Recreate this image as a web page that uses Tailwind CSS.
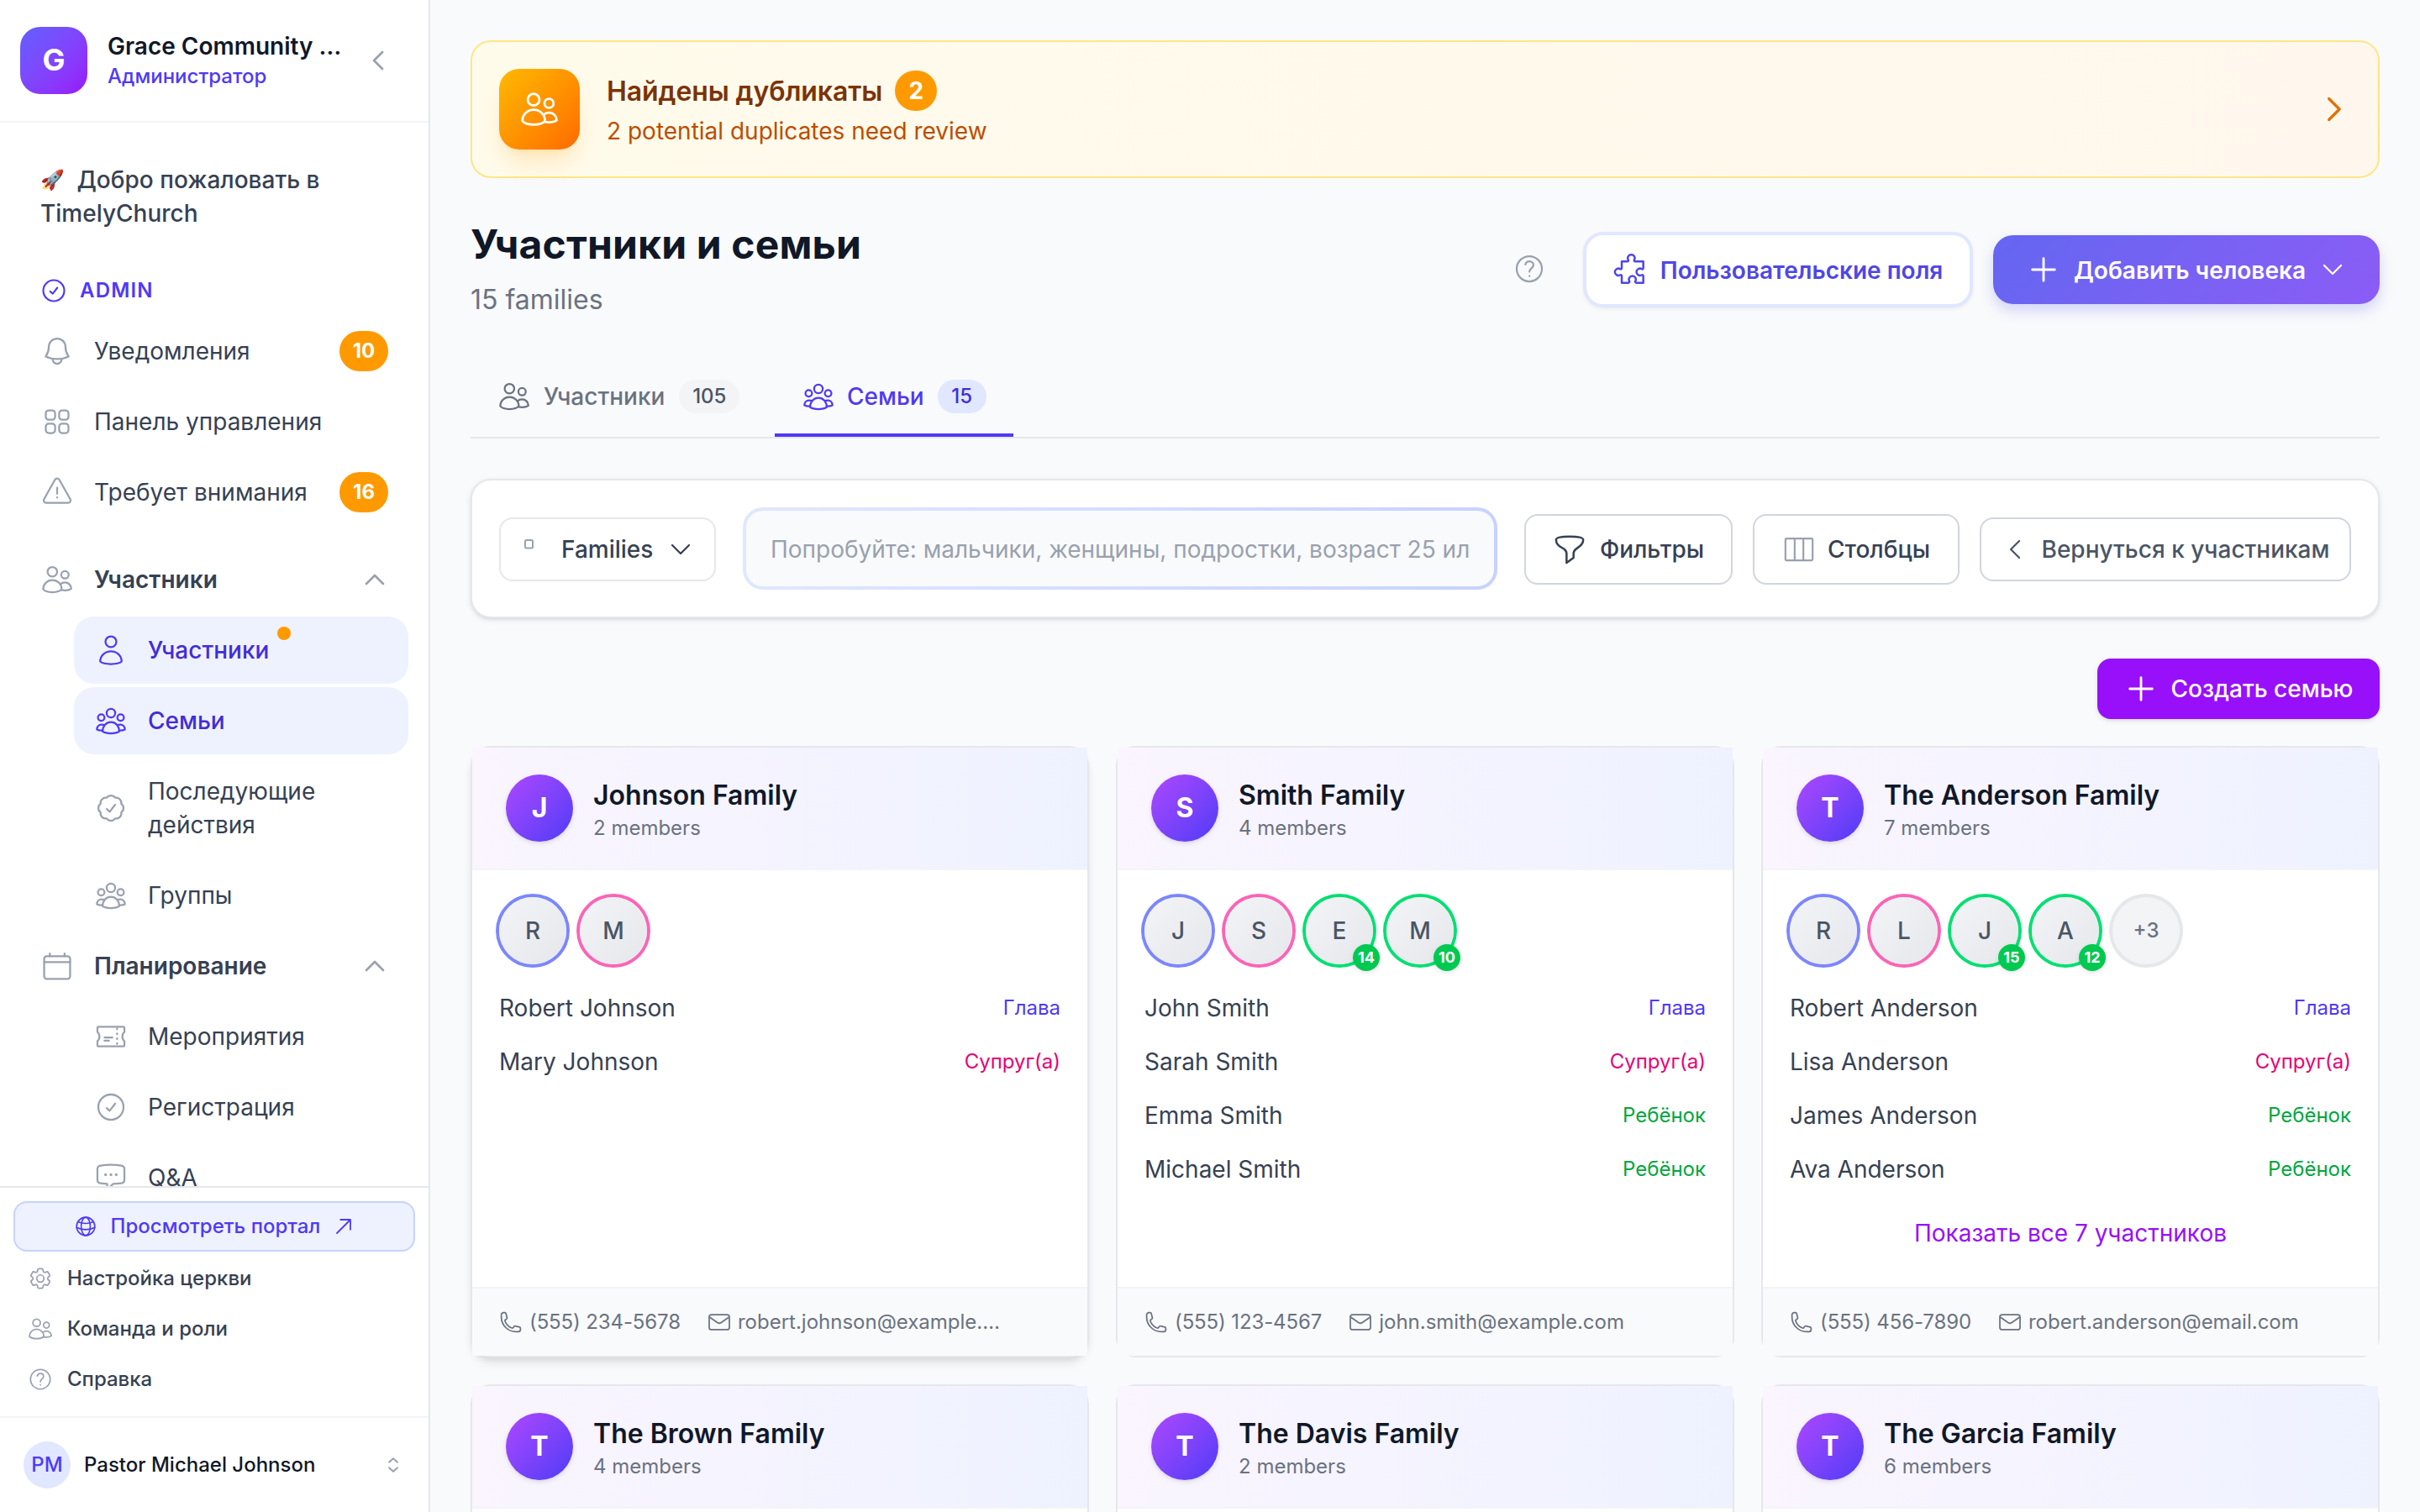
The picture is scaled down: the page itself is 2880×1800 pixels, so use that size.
<!DOCTYPE html>
<html lang="ru">
  <head>
    <meta charset="UTF-8" />
    <meta name="viewport" content="width=device-width, initial-scale=1.0" />
    <title>TimelyChurch — Участники и семьи</title>
    <script src="https://cdn.jsdelivr.net/npm/@tailwindcss/browser@4"></script>
  </head>

  <body class="flex w-full h-screen overflow-hidden bg-gray-50 font-['Inter',sans-serif] text-[28px] leading-10 text-gray-700">
    <!-- ====== Icon sprite ====== -->
    <svg class="hidden" xmlns="http://www.w3.org/2000/svg">
      <defs>
        <symbol id="users" viewBox="0 0 24 24">
          <circle cx="8.2" cy="5.8" r="3.8" /><circle cx="18.2" cy="8.2" r="2.95" />
          <path d="M.9 19.6c0-4 3.3-7.2 7.35-7.2s7.35 3.2 7.35 7.2c-1.2 1.6-4.4 2.4-7.35 2.4S2.1 21.2.9 19.6ZM14.5 15.7c1-.9 2.3-1.4 3.7-1.4 2.9 0 5 2.2 5 4.9-1.4 1-4.6 1.6-7.6 1.1" />
        </symbol>
        <symbol id="user" viewBox="0 0 24 24">
          <circle cx="12" cy="5.3" r="4.3" />
          <path d="M3.5 21c0-4.6 3.8-8.1 8.5-8.1s8.5 3.5 8.5 8.1c-1.6 1.4-5 2-8.5 2s-6.9-.6-8.5-2Z" />
        </symbol>
        <symbol id="group" viewBox="0 0 24 24">
          <circle cx="12" cy="6" r="3.4" /><circle cx="4.3" cy="9.5" r="2.6" /><circle cx="19.7" cy="9.5" r="2.6" />
          <path d="M5.4 20.5c0-4.5 2.9-7.4 6.6-7.4s6.6 2.9 6.6 7.4c-1.4 1-3.9 1.5-6.6 1.5s-5.2-.5-6.6-1.5ZM7 15.4c-.8-.2-1.6-.3-2.4-.3-2.2 0-3.7 1.7-3.7 3.9 1.2.6 2.8.8 4.6.7M17 15.4c.8-.2 1.6-.3 2.4-.3 2.2 0 3.7 1.7 3.7 3.9-1.2.6-2.8.8-4.6.7" />
        </symbol>
        <symbol id="bell" viewBox="0 0 24 24">
          <path d="M12 2a6.6 6.6 0 0 0-6.6 6.6c0 4-1 5.4-2.5 7.7 2.7 1.3 5.8 1.9 9.1 1.9s6.4-.6 9.1-1.9c-1.5-2.3-2.5-3.7-2.5-7.7A6.6 6.6 0 0 0 12 2ZM8.4 18.4a3.6 3.6 0 0 0 7.2 0" />
        </symbol>
        <symbol id="grid" viewBox="0 0 24 24">
          <rect x="3" y="3" width="7.4" height="7.4" rx="2.3" /><rect x="13.6" y="3" width="7.4" height="7.4" rx="2.3" />
          <rect x="3" y="13.6" width="7.4" height="7.4" rx="2.3" /><rect x="13.6" y="13.6" width="7.4" height="7.4" rx="2.3" />
        </symbol>
        <symbol id="warning" viewBox="0 0 24 24">
          <path d="M10.3 2 1.5 17.7a1.9 1.9 0 0 0 1.7 2.7h17.6a1.9 1.9 0 0 0 1.7-2.7L13.7 2a1.95 1.95 0 0 0-3.4 0ZM12 8.4v4.8M12 16.1v.1" />
        </symbol>
        <symbol id="check-circle" viewBox="0 0 24 24">
          <circle cx="12" cy="12" r="10" /><path d="m8.6 12.8 2.4 2.1 4.4-5.7" />
        </symbol>
        <symbol id="check-badge" viewBox="0 0 24 24">
          <g transform="translate(-1.3 -1.3) scale(1.11)" stroke-width="1.35">
            <path d="M21 12c0 1.268-.63 2.39-1.593 3.068a3.745 3.745 0 0 1-1.043 3.296 3.745 3.745 0 0 1-3.296 1.043A3.745 3.745 0 0 1 12 21c-1.268 0-2.39-.63-3.068-1.593a3.746 3.746 0 0 1-3.296-1.043 3.745 3.745 0 0 1-1.043-3.296A3.745 3.745 0 0 1 3 12c0-1.268.63-2.39 1.593-3.068a3.745 3.745 0 0 1 1.043-3.296 3.746 3.746 0 0 1 3.296-1.043A3.746 3.746 0 0 1 12 3c1.268 0 2.39.63 3.068 1.593a3.746 3.746 0 0 1 3.296 1.043 3.746 3.746 0 0 1 1.043 3.296A3.745 3.745 0 0 1 21 12Z" />
            <path d="m9 12.6 2.1 2 3.9-5" />
          </g>
        </symbol>
        <symbol id="calendar" viewBox="0 0 24 24">
          <rect x="1.7" y="4.3" width="20.6" height="17.9" rx="2" /><path d="M1.7 8.9h20.6M6.2 2v2.3M17.9 2v2.3" />
        </symbol>
        <symbol id="ticket" viewBox="0 0 24 24">
          <path d="M1.3 5c0-.5.3-.8.8-.8h19.8c.5 0 .8.3.8.8v3.4c-1.2.9-1.6 2.2-1.6 3.6s.4 2.7 1.6 3.6V19c0 .5-.3.8-.8.8H2.1c-.5 0-.8-.3-.8-.8v-3.4c1.2-.9 1.6-2.2 1.6-3.6s-.4-2.7-1.6-3.6ZM6.9 12.7h6.3M6.9 15.3h3.5" />
          <path d="M16.9 5.6v13.6" stroke-dasharray=".6 3.3" />
        </symbol>
        <symbol id="chat" viewBox="0 0 24 24">
          <path d="M3.8 2.4c5.2-.8 11.2-.8 16.4 0 1.5.2 2.5 1.3 2.5 2.8v8.4c0 1.5-1 2.6-2.5 2.8-2.2.3-4.4.5-6.4.5-1.5 1.4-3 3-4.8 5V16.9c-1.8-.1-3.5-.3-5.2-.5-1.5-.2-2.5-1.3-2.5-2.8V5.2c0-1.5 1-2.6 2.5-2.8Z" />
          <path d="M7.8 9.6h.01M12 9.6h.01M16.2 9.6h.01" stroke-width="2.2" />
        </symbol>
        <symbol id="globe" viewBox="0 0 24 24">
          <circle cx="12" cy="12" r="10" /><ellipse cx="12" cy="12" rx="5" ry="10" />
          <path d="M3.6 7c2.4 1.2 5.2 1.8 8.4 1.8s6-.6 8.4-1.8M2 13.2c2.8 1.6 6.2 2.4 10 2.4s7.2-.8 10-2.4" />
        </symbol>
        <symbol id="arrow-up-right" viewBox="0 0 24 24"><path d="M4 20 20 4M8.2 4H20v11.8" /></symbol>
        <symbol id="cog" viewBox="0 0 24 24">
          <g transform="translate(-1.3 -1.3) scale(1.11)" stroke-width="1.35">
            <path d="M9.594 3.94c.09-.542.56-.94 1.11-.94h2.593c.55 0 1.02.398 1.11.94l.213 1.281c.063.374.313.686.645.87.074.04.147.083.22.127.325.196.72.257 1.075.124l1.217-.456a1.125 1.125 0 0 1 1.37.49l1.296 2.247a1.125 1.125 0 0 1-.26 1.431l-1.003.827c-.293.241-.438.613-.43.992a7.723 7.723 0 0 1 0 .255c-.008.378.137.75.43.991l1.004.827c.424.35.534.955.26 1.43l-1.298 2.247a1.125 1.125 0 0 1-1.369.491l-1.217-.456c-.355-.133-.75-.072-1.076.124a6.47 6.47 0 0 1-.22.128c-.331.183-.581.495-.644.869l-.213 1.281c-.09.543-.56.94-1.11.94h-2.594c-.55 0-1.019-.398-1.11-.94l-.213-1.281c-.062-.374-.312-.686-.644-.87a6.52 6.52 0 0 1-.22-.127c-.325-.196-.72-.257-1.076-.124l-1.217.456a1.125 1.125 0 0 1-1.369-.49l-1.297-2.247a1.125 1.125 0 0 1 .26-1.431l1.004-.827c.292-.24.437-.613.43-.991a6.932 6.932 0 0 1 0-.255c.007-.38-.138-.751-.43-.992l-1.004-.827a1.125 1.125 0 0 1-.26-1.43l1.297-2.247a1.125 1.125 0 0 1 1.37-.491l1.216.456c.356.133.751.072 1.076-.124.072-.044.146-.086.22-.128.332-.183.582-.495.644-.869l.214-1.28Z" />
            <circle cx="12" cy="12" r="3.3" />
          </g>
        </symbol>
        <symbol id="help" viewBox="0 0 24 24">
          <circle cx="12" cy="12" r="10" /><path d="M8.9 8.6c.3-1.6 1.5-2.6 3.2-2.6 1.8 0 3.2 1.2 3.2 2.9 0 2.7-3.2 2.7-3.2 5.5M12.1 17.7v.1" />
        </symbol>
        <symbol id="selector" viewBox="0 0 24 24"><path d="m7 8.7 5-4.5 5 4.5M7 15.3l5 4.5 5-4.5" /></symbol>
        <symbol id="chevron-left" viewBox="0 0 24 24"><path d="M15.8 4.5 8.3 12l7.5 7.5" /></symbol>
        <symbol id="chevron-right" viewBox="0 0 24 24"><path d="M8.2 4.5 15.7 12l-7.5 7.5" /></symbol>
        <symbol id="chevron-up" viewBox="0 0 24 24"><path d="M4.5 15.7 12 8.2l7.5 7.5" /></symbol>
        <symbol id="chevron-down" viewBox="0 0 24 24"><path d="M4.5 8.3 12 15.8l7.5-7.5" /></symbol>
        <symbol id="plus" viewBox="0 0 24 24"><path d="M12 4v16M4 12h16" /></symbol>
        <symbol id="puzzle" viewBox="0 0 24 24">
          <path d="M6 5.6h3.9c.8 0 1-.6.7-1.2a2.5 2.5 0 1 1 4.4 0c-.3.6-.1 1.2.7 1.2h5.7v4.6c0 .8-.6 1-1.2.7a2.5 2.5 0 1 0 0 4.4c.6-.3 1.2-.1 1.2.7v4.8h-4.9c-.8 0-1-.6-.7-1.2a2.5 2.5 0 1 0-4.4 0c.3.6.1 1.2-.7 1.2H6V16c0-.8-.6-1-1.2-.7a2.5 2.5 0 1 1 0-4.4c.6.3 1.2.1 1.2-.7Z" />
        </symbol>
        <symbol id="funnel" viewBox="0 0 24 24">
          <path d="M2.3 5.2c0-1.6 3.7-2.4 9.7-2.4s9.7.8 9.7 2.4c0 3.4-2.8 4.8-5.2 6.6-1.3 1-1.7 1.8-1.7 3.2v3l-5 3.6V15c0-1.4-.4-2.2-1.7-3.2C5.1 10 2.3 8.6 2.3 5.2Z" />
        </symbol>
        <symbol id="columns" viewBox="0 0 24 24">
          <rect x="2.3" y="4.3" width="19.4" height="15.6" rx=".8" /><path d="M8.9 4.3v15.6M15.1 4.3v15.6" />
        </symbol>
        <symbol id="phone" viewBox="0 0 24 24">
          <path d="M2.25 6.75c0 8.284 6.716 15 15 15h2.25a2.25 2.25 0 0 0 2.25-2.25v-1.372c0-.516-.351-.966-.852-1.091l-4.423-1.106c-.44-.11-.902.055-1.173.417l-.97 1.293c-.282.376-.769.542-1.21.38a12.035 12.035 0 0 1-7.143-7.143c-.162-.441.004-.928.38-1.21l1.293-.97c.363-.271.527-.734.417-1.173L6.963 3.102a1.125 1.125 0 0 0-1.091-.852H4.5A2.25 2.25 0 0 0 2.25 4.5v2.25Z" />
        </symbol>
        <symbol id="mail" viewBox="0 0 24 24">
          <rect x="1.7" y="4.3" width="20.6" height="15.4" rx="2.4" /><path d="m2.4 7 7.7 5.4a3.3 3.3 0 0 0 3.8 0L21.6 7" />
        </symbol>
      </defs>
    </svg>

    <!-- ====== Sidebar ====== -->
    <aside class="flex flex-col shrink-0 w-[512px] h-full bg-white border-r-2 border-gray-200">
      <div class="flex items-center h-[146px] shrink-0 pl-6 pr-11 border-b-2 border-gray-100">
        <div class="flex items-center justify-center size-20 pb-[2px] rounded-3xl bg-linear-to-br from-[#615fff] to-[#9810fa] text-white text-[36px] font-bold">G</div>
        <div class="ml-6 w-[288px] pt-[2px]">
          <p class="truncate font-semibold leading-9 text-gray-900">Grace Community Church</p>
          <p class="text-2xl leading-[36px] font-medium text-indigo-600">Администратор</p>
        </div>
        <svg class="ml-auto size-8 fill-none stroke-gray-400 stroke-2 [stroke-linecap:round] [stroke-linejoin:round]"><use href="#chevron-left" /></svg>
      </div>

      <nav class="flex-1 min-h-0 overflow-hidden px-6 pt-12">
        <p class="px-6 font-medium"><span class="inline-block w-9 h-10 align-top text-[23px]">🚀</span> Добро пожаловать в TimelyChurch</p>

        <p class="flex items-center gap-4 h-10 mt-[52px] mb-3 pl-[25px] text-2xl font-semibold tracking-wider text-indigo-600">
          <svg class="size-[30px] fill-none stroke-current stroke-[1.7] [stroke-linecap:round] [stroke-linejoin:round]"><use href="#check-circle" /></svg>
          ADMIN
        </p>

        <div class="flex flex-col gap-1">
          <a class="flex items-center h-20 pl-[26px] pr-6">
            <svg class="size-9 mr-[26px] fill-none stroke-gray-400 stroke-[1.5] [stroke-linecap:round] [stroke-linejoin:round]"><use href="#bell" /></svg>
            Уведомления
            <span class="ml-auto flex items-center justify-center w-[58px] h-12 rounded-full bg-amber-500 text-2xl font-bold text-white">10</span>
          </a>
          <a class="flex items-center h-20 pl-[26px] pr-6">
            <svg class="size-9 mr-[26px] fill-none stroke-gray-400 stroke-[1.5] [stroke-linecap:round] [stroke-linejoin:round]"><use href="#grid" /></svg>
            Панель управления
          </a>
          <a class="flex items-center h-20 pl-[26px] pr-6">
            <svg class="size-9 mr-[26px] fill-none stroke-gray-400 stroke-[1.5] [stroke-linecap:round] [stroke-linejoin:round]"><use href="#warning" /></svg>
            Требует внимания
            <span class="ml-auto flex items-center justify-center w-[58px] h-12 rounded-full bg-amber-500 text-2xl font-bold text-white">16</span>
          </a>
        </div>

        <!-- Members -->
        <div class="flex flex-col gap-1 mt-6">
          <div class="flex items-center h-20 pl-[26px] pr-6 font-semibold">
            <svg class="size-9 mr-[26px] fill-none stroke-gray-400 stroke-[1.5] [stroke-linecap:round] [stroke-linejoin:round]"><use href="#users" /></svg>
            Участники
            <svg class="ml-auto size-8 fill-none stroke-gray-400 stroke-2 [stroke-linecap:round] [stroke-linejoin:round]"><use href="#chevron-up" /></svg>
          </div>
          <a class="flex items-center h-20 ml-16 pl-[26px] rounded-3xl bg-indigo-50 font-medium text-indigo-700">
            <svg class="size-9 mr-[26px] fill-none stroke-indigo-600 stroke-[1.5] [stroke-linecap:round] [stroke-linejoin:round]"><use href="#user" /></svg>
            <span class="relative">
              Участники
              <span class="absolute -top-2 -right-[26px] size-4 rounded-full bg-amber-500"></span>
            </span>
          </a>
          <a class="flex items-center h-20 ml-16 pl-[26px] rounded-3xl bg-indigo-50 font-medium text-indigo-700">
            <svg class="size-9 mr-[26px] fill-none stroke-indigo-600 stroke-[1.5] [stroke-linecap:round] [stroke-linejoin:round]"><use href="#group" /></svg>
            Семьи
          </a>
          <a class="flex items-center h-[120px] ml-16 pl-[26px]">
            <svg class="size-9 mr-[26px] fill-none stroke-gray-400 stroke-[1.5] [stroke-linecap:round] [stroke-linejoin:round]"><use href="#check-badge" /></svg>
            <span class="w-56">Последующие действия</span>
          </a>
          <a class="flex items-center h-20 ml-16 pl-[26px]">
            <svg class="size-9 mr-[26px] fill-none stroke-gray-400 stroke-[1.5] [stroke-linecap:round] [stroke-linejoin:round]"><use href="#group" /></svg>
            Группы
          </a>
        </div>

        <!-- Planning -->
        <div class="flex flex-col gap-1 mt-1">
          <div class="flex items-center h-20 pl-[26px] pr-6 font-semibold">
            <svg class="size-9 mr-[26px] fill-none stroke-gray-400 stroke-[1.5] [stroke-linecap:round] [stroke-linejoin:round]"><use href="#calendar" /></svg>
            Планирование
            <svg class="ml-auto size-8 fill-none stroke-gray-400 stroke-2 [stroke-linecap:round] [stroke-linejoin:round]"><use href="#chevron-up" /></svg>
          </div>
          <a class="flex items-center h-20 ml-16 pl-[26px]">
            <svg class="size-9 mr-[26px] fill-none stroke-gray-400 stroke-[1.5] [stroke-linecap:round] [stroke-linejoin:round]"><use href="#ticket" /></svg>
            Мероприятия
          </a>
          <a class="flex items-center h-20 ml-16 pl-[26px]">
            <svg class="size-9 mr-[26px] fill-none stroke-gray-400 stroke-[1.5] [stroke-linecap:round] [stroke-linejoin:round]"><use href="#check-circle" /></svg>
            Регистрация
          </a>
          <a class="flex items-center h-20 ml-16 pl-[26px]">
            <svg class="size-9 mr-[26px] fill-none stroke-gray-400 stroke-[1.5] [stroke-linecap:round] [stroke-linejoin:round]"><use href="#chat" /></svg>
            Q&amp;A
          </a>
        </div>
      </nav>

      <!-- Sidebar footer -->
      <div class="shrink-0 h-[274px] px-4 pt-4 border-t-2 border-gray-200 text-2xl font-medium">
        <a class="flex items-center justify-center h-[60px] rounded-2xl border-2 border-indigo-200 bg-indigo-50 text-indigo-600">
          <svg class="size-[26px] mr-[17px] fill-none stroke-current stroke-[1.5] [stroke-linecap:round] [stroke-linejoin:round]"><use href="#globe" /></svg>
          Просмотреть портал
          <svg class="size-6 ml-4 fill-none stroke-current stroke-[1.8] [stroke-linecap:round] [stroke-linejoin:round]"><use href="#arrow-up-right" /></svg>
        </a>
        <a class="flex items-center gap-[18px] h-[60px] mt-[2px] pl-[18px]">
          <svg class="size-7 fill-none stroke-gray-400 stroke-[1.5] [stroke-linecap:round] [stroke-linejoin:round]"><use href="#cog" /></svg>
          Настройка церкви
        </a>
        <a class="flex items-center gap-[18px] h-[60px] pl-[18px]">
          <svg class="size-7 fill-none stroke-gray-400 stroke-[1.5] [stroke-linecap:round] [stroke-linejoin:round]"><use href="#users" /></svg>
          Команда и роли
        </a>
        <a class="flex items-center gap-[18px] h-[60px] pl-[18px]">
          <svg class="size-7 fill-none stroke-gray-400 stroke-[1.5] [stroke-linecap:round] [stroke-linejoin:round]"><use href="#help" /></svg>
          Справка
        </a>
      </div>
      <div class="flex items-center shrink-0 h-[114px] pl-7 pr-[30px] border-t-2 border-gray-100 text-2xl font-medium text-gray-900">
        <span class="flex items-center justify-center size-14 mr-4 rounded-full bg-indigo-100 text-indigo-600">PM</span>
        Pastor Michael Johnson
        <svg class="ml-auto size-6 fill-none stroke-gray-400 stroke-2 [stroke-linecap:round] [stroke-linejoin:round]"><use href="#selector" /></svg>
      </div>
    </aside>

    <!-- ====== Main ====== -->
    <main class="flex-1 min-w-0 h-full overflow-hidden px-12 pt-12">
      <!-- Duplicates banner -->
      <section class="flex items-center h-[164px] px-8 rounded-3xl border-2 border-amber-200 bg-linear-to-r from-amber-50 to-orange-50">
        <div class="flex items-center justify-center size-24 rounded-3xl bg-linear-to-br from-[#ffb900] to-[#ff6900] shadow-[0_20px_30px_-6px_rgba(254,154,0,0.2),0_8px_12px_-8px_rgba(254,154,0,0.2)]">
          <svg class="size-11 fill-none stroke-white stroke-[1.5] [stroke-linecap:round] [stroke-linejoin:round]"><use href="#users" /></svg>
        </div>
        <div class="ml-8">
          <div class="flex items-center gap-[15px] h-12">
            <h2 class="pt-[2px] text-[32px] tracking-[-0.1px] font-semibold text-amber-900">Найдены дубликаты</h2>
            <span class="flex items-center justify-center w-[50px] h-12 rounded-full bg-amber-500 text-[28px] font-bold text-white">2</span>
          </div>
          <p class="mt-1 text-amber-700">2 potential duplicates need review</p>
        </div>
        <svg class="ml-auto size-10 fill-none stroke-amber-600 stroke-2 [stroke-linecap:round] [stroke-linejoin:round]"><use href="#chevron-right" /></svg>
      </section>

      <!-- Page title -->
      <section class="flex items-center h-[122px] mt-12">
        <div class="pt-[2px]">
          <h1 class="text-5xl leading-[60px] tracking-[0.15px] font-bold text-gray-900">Участники и семьи</h1>
          <p class="mt-[9px] text-[32px] leading-[54px] text-gray-500">15 families</p>
        </div>
        <svg class="ml-auto mr-[46px] mb-[2px] size-9 fill-none stroke-gray-400 stroke-[1.5] [stroke-linecap:round] [stroke-linejoin:round]"><use href="#help" /></svg>
        <button class="flex items-center justify-center gap-4 w-[464px] h-[90px] mr-6 pt-[2px] rounded-3xl border-4 border-indigo-100 bg-white font-semibold text-[#4f46e5] shadow-[0_2px_4px_rgba(0,0,0,0.06)]">
          <svg class="size-10 fill-none stroke-current stroke-[1.5] [stroke-linecap:round] [stroke-linejoin:round]"><use href="#puzzle" /></svg>
          Пользовательские поля
        </button>
        <button class="flex items-center justify-between w-[460px] h-[82px] px-10 rounded-3xl bg-linear-135 from-[#6366f1] to-[#8b5cf6] font-semibold text-white shadow-[0_8px_16px_rgba(99,102,241,0.25)]">
          <svg class="size-10 fill-none stroke-current stroke-[1.7] [stroke-linecap:round]"><use href="#plus" /></svg>
          <span class="pt-[2px]">Добавить человека</span>
          <svg class="size-8 fill-none stroke-current stroke-[1.7] [stroke-linecap:round] [stroke-linejoin:round]"><use href="#chevron-down" /></svg>
        </button>
      </section>

      <!-- Tabs -->
      <div class="flex gap-2 mt-[46px] border-b-2 border-gray-200 font-medium">
        <a class="flex items-center gap-[17px] w-[354px] h-[92px] pl-[34px] border-b-4 border-transparent text-gray-500">
          <svg class="size-9 fill-none stroke-current stroke-[1.5] [stroke-linecap:round] [stroke-linejoin:round]"><use href="#users" /></svg>
          Участники
          <span class="flex items-center justify-center w-[72px] h-10 rounded-full bg-gray-100 text-2xl text-gray-600">105</span>
        </a>
        <a class="flex items-center gap-4 w-[284px] h-[92px] pl-[34px] border-b-4 border-indigo-600 text-indigo-600">
          <svg class="size-9 fill-none stroke-current stroke-[1.5] [stroke-linecap:round] [stroke-linejoin:round]"><use href="#group" /></svg>
          Семьи
          <span class="flex items-center justify-center w-[58px] h-10 rounded-full bg-indigo-100 text-2xl text-indigo-700">15</span>
        </a>
      </div>

      <!-- Filter bar -->
      <section class="flex items-center h-[166px] mt-12 px-8 rounded-3xl border-2 border-gray-200 bg-white font-medium shadow-[0_2px_6px_rgba(0,0,0,0.1),0_2px_4px_-2px_rgba(0,0,0,0.1)]">
        <button class="flex items-center w-[258px] h-[76px] mt-[2px] px-6 rounded-2xl border-2 border-gray-200">
          <svg class="size-[30px] mr-[18px] fill-none stroke-gray-400 stroke-2" viewBox="0 0 30 30"><rect x="5" y="4" width="9" height="9.5" rx="1.5" /></svg>
          Families
          <svg class="ml-auto size-8 fill-none stroke-current stroke-[1.7] [stroke-linecap:round] [stroke-linejoin:round]"><use href="#chevron-down" /></svg>
        </button>
        <div class="flex-1 min-w-0 h-[98px] mx-8 p-1 rounded-3xl bg-linear-to-r from-indigo-100 to-indigo-200">
          <div class="flex items-center h-full pl-[29px] pr-6 pt-[1px] rounded-[20px] bg-gray-50 font-normal text-gray-400">
            <span class="whitespace-nowrap">Попробуйте: мальчики, женщины, подростки, возраст 25 ил</span>
          </div>
        </div>
        <button class="flex items-center justify-center gap-4 w-[248px] h-[84px] mt-[2px] rounded-2xl border-2 border-gray-300">
          <svg class="size-10 fill-none stroke-current stroke-[1.5] [stroke-linecap:round] [stroke-linejoin:round]"><use href="#funnel" /></svg>
          Фильтры
        </button>
        <button class="flex items-center justify-center gap-[14px] w-[246px] h-[84px] mt-[2px] ml-6 rounded-2xl border-2 border-gray-300">
          <svg class="size-10 fill-none stroke-gray-400 stroke-[1.3] [stroke-linecap:round] [stroke-linejoin:round]"><use href="#columns" /></svg>
          Столбцы
        </button>
        <button class="flex items-center justify-center gap-4 w-[442px] h-[76px] mt-[2px] ml-6 rounded-2xl border-2 border-gray-300 text-gray-600">
          <svg class="size-8 fill-none stroke-current stroke-[1.7] [stroke-linecap:round] [stroke-linejoin:round]"><use href="#chevron-left" /></svg>
          Вернуться к участникам
        </button>
      </section>

      <div class="flex justify-end mt-12">
        <button class="flex items-center justify-center gap-4 w-[336px] h-[72px] rounded-2xl bg-purple-600 font-medium text-white shadow-[0_2px_6px_rgba(0,0,0,0.1),0_2px_4px_-2px_rgba(0,0,0,0.1)]">
          <svg class="size-10 fill-none stroke-current stroke-[1.7] [stroke-linecap:round]"><use href="#plus" /></svg>
          Создать семью
        </button>
      </div>

      <!-- Family cards -->
      <section class="grid grid-cols-3 gap-8 mt-8">
        <article class="flex flex-col h-[728px] rounded-3xl border-2 border-gray-200 bg-white shadow-[0_8px_12px_-2px_rgba(0,0,0,0.1),0_4px_8px_-4px_rgba(0,0,0,0.1)]">
          <header class="flex items-center h-[146px] px-10 border-b-2 border-gray-100 bg-linear-to-r from-purple-50 to-indigo-50">
            <span class="flex items-center justify-center size-20 rounded-full bg-linear-to-br from-[#ad46ff] to-[#4f39f6] text-[32px] font-bold text-white shadow-[0_2px_6px_rgba(0,0,0,0.1),0_2px_4px_-2px_rgba(0,0,0,0.1)]">J</span>
            <div class="ml-6 pt-1">
              <h3 class="text-[32px] leading-[44px] font-semibold text-gray-900">Johnson Family</h3>
              <p class="text-2xl leading-[34px] text-gray-500">2 members</p>
            </div>
          </header>
          <div class="flex-1 p-8">
            <div class="flex gap-4 font-medium text-gray-600">
              <span class="flex items-center justify-center size-20 rounded-full bg-linear-to-br from-gray-100 to-gray-200 ring-4 ring-indigo-400">R</span>
              <span class="flex items-center justify-center size-20 rounded-full bg-linear-to-br from-gray-100 to-gray-200 ring-4 ring-pink-400">M</span>
            </div>
            <ul class="flex flex-col gap-6 mt-8">
              <li class="flex items-center justify-between h-10">Robert Johnson <span class="text-2xl text-indigo-600">Глава</span></li>
              <li class="flex items-center justify-between h-10">Mary Johnson <span class="text-2xl text-pink-600">Супруг(а)</span></li>
            </ul>
          </div>
          <footer class="flex items-center gap-8 h-[82px] px-8 border-t-2 border-gray-100 bg-gray-50 text-2xl text-gray-500">
            <span class="flex items-center gap-2 tracking-[-0.12px]"><svg class="size-7 fill-none stroke-current stroke-[1.5] [stroke-linejoin:round]"><use href="#phone" /></svg>(555) 234-5678</span>
            <span class="flex items-center gap-2"><svg class="size-7 fill-none stroke-current stroke-[1.5] [stroke-linejoin:round]"><use href="#mail" /></svg><span class="max-w-[320px] truncate">robert.johnson@example.com</span></span>
          </footer>
        </article>

        <article class="flex flex-col h-[728px] rounded-3xl border-2 border-gray-200 bg-white">
          <header class="flex items-center h-[146px] px-10 border-b-2 border-gray-100 bg-linear-to-r from-purple-50 to-indigo-50">
            <span class="flex items-center justify-center size-20 rounded-full bg-linear-to-br from-[#ad46ff] to-[#4f39f6] text-[32px] font-bold text-white shadow-[0_2px_6px_rgba(0,0,0,0.1),0_2px_4px_-2px_rgba(0,0,0,0.1)]">S</span>
            <div class="ml-6 pt-1">
              <h3 class="text-[32px] leading-[44px] font-semibold text-gray-900">Smith Family</h3>
              <p class="text-2xl leading-[34px] text-gray-500">4 members</p>
            </div>
          </header>
          <div class="flex-1 p-8">
            <div class="flex gap-4 font-medium text-gray-600">
              <span class="flex items-center justify-center size-20 rounded-full bg-linear-to-br from-gray-100 to-gray-200 ring-4 ring-indigo-400">J</span>
              <span class="flex items-center justify-center size-20 rounded-full bg-linear-to-br from-gray-100 to-gray-200 ring-4 ring-pink-400">S</span>
              <span class="relative flex items-center justify-center size-20 rounded-full bg-linear-to-br from-gray-100 to-gray-200 ring-4 ring-green-400">E
                <span class="absolute -right-2 -bottom-2 flex items-center justify-center size-8 rounded-full bg-green-500 text-[18px] font-bold text-white shadow-[0_2px_6px_rgba(0,0,0,0.1)]">14</span>
              </span>
              <span class="relative flex items-center justify-center size-20 rounded-full bg-linear-to-br from-gray-100 to-gray-200 ring-4 ring-green-400">M
                <span class="absolute -right-2 -bottom-2 flex items-center justify-center size-8 rounded-full bg-green-500 text-[18px] font-bold text-white shadow-[0_2px_6px_rgba(0,0,0,0.1)]">10</span>
              </span>
            </div>
            <ul class="flex flex-col gap-6 mt-8">
              <li class="flex items-center justify-between h-10">John Smith <span class="text-2xl text-indigo-600">Глава</span></li>
              <li class="flex items-center justify-between h-10">Sarah Smith <span class="text-2xl text-pink-600">Супруг(а)</span></li>
              <li class="flex items-center justify-between h-10">Emma Smith <span class="text-2xl text-green-600">Ребёнок</span></li>
              <li class="flex items-center justify-between h-10">Michael Smith <span class="text-2xl text-green-600">Ребёнок</span></li>
            </ul>
          </div>
          <footer class="flex items-center gap-8 h-[82px] px-8 border-t-2 border-gray-100 bg-gray-50 text-2xl text-gray-500">
            <span class="flex items-center gap-2 tracking-[-0.12px]"><svg class="size-7 fill-none stroke-current stroke-[1.5] [stroke-linejoin:round]"><use href="#phone" /></svg>(555) 123-4567</span>
            <span class="flex items-center gap-2"><svg class="size-7 fill-none stroke-current stroke-[1.5] [stroke-linejoin:round]"><use href="#mail" /></svg>john.smith@example.com</span>
          </footer>
        </article>

        <article class="flex flex-col h-[728px] rounded-3xl border-2 border-gray-200 bg-white">
          <header class="flex items-center h-[146px] px-10 border-b-2 border-gray-100 bg-linear-to-r from-purple-50 to-indigo-50">
            <span class="flex items-center justify-center size-20 rounded-full bg-linear-to-br from-[#ad46ff] to-[#4f39f6] text-[32px] font-bold text-white shadow-[0_2px_6px_rgba(0,0,0,0.1),0_2px_4px_-2px_rgba(0,0,0,0.1)]">T</span>
            <div class="ml-6 pt-1">
              <h3 class="text-[32px] leading-[44px] font-semibold text-gray-900">The Anderson Family</h3>
              <p class="text-2xl leading-[34px] text-gray-500">7 members</p>
            </div>
          </header>
          <div class="flex-1 p-8">
            <div class="flex gap-4 font-medium text-gray-600">
              <span class="flex items-center justify-center size-20 rounded-full bg-linear-to-br from-gray-100 to-gray-200 ring-4 ring-indigo-400">R</span>
              <span class="flex items-center justify-center size-20 rounded-full bg-linear-to-br from-gray-100 to-gray-200 ring-4 ring-pink-400">L</span>
              <span class="relative flex items-center justify-center size-20 rounded-full bg-linear-to-br from-gray-100 to-gray-200 ring-4 ring-green-400">J
                <span class="absolute -right-2 -bottom-2 flex items-center justify-center size-8 rounded-full bg-green-500 text-[18px] font-bold text-white shadow-[0_2px_6px_rgba(0,0,0,0.1)]">15</span>
              </span>
              <span class="relative flex items-center justify-center size-20 rounded-full bg-linear-to-br from-gray-100 to-gray-200 ring-4 ring-green-400">A
                <span class="absolute -right-2 -bottom-2 flex items-center justify-center size-8 rounded-full bg-green-500 text-[18px] font-bold text-white shadow-[0_2px_6px_rgba(0,0,0,0.1)]">12</span>
              </span>
              <span class="flex items-center justify-center size-20 rounded-full bg-gray-100 ring-4 ring-gray-200 text-2xl text-gray-500">+3</span>
            </div>
            <ul class="flex flex-col gap-6 mt-8">
              <li class="flex items-center justify-between h-10">Robert Anderson <span class="text-2xl text-indigo-600">Глава</span></li>
              <li class="flex items-center justify-between h-10">Lisa Anderson <span class="text-2xl text-pink-600">Супруг(а)</span></li>
              <li class="flex items-center justify-between h-10">James Anderson <span class="text-2xl text-green-600">Ребёнок</span></li>
              <li class="flex items-center justify-between h-10">Ava Anderson <span class="text-2xl text-green-600">Ребёнок</span></li>
            </ul>
            <p class="mt-6 py-3 text-center text-purple-600">Показать все 7 участников</p>
          </div>
          <footer class="flex items-center gap-8 h-[82px] px-8 border-t-2 border-gray-100 bg-gray-50 text-2xl text-gray-500">
            <span class="flex items-center gap-2 tracking-[-0.12px]"><svg class="size-7 fill-none stroke-current stroke-[1.5] [stroke-linejoin:round]"><use href="#phone" /></svg>(555) 456-7890</span>
            <span class="flex items-center gap-2"><svg class="size-7 fill-none stroke-current stroke-[1.5] [stroke-linejoin:round]"><use href="#mail" /></svg>robert.anderson@email.com</span>
          </footer>
        </article>

        <!-- Second row, runs below the fold -->
        <article class="flex flex-col h-[728px] rounded-3xl border-2 border-gray-200 bg-white">
          <header class="flex items-center h-[146px] px-10 border-b-2 border-gray-100 bg-linear-to-r from-purple-50 to-indigo-50">
            <span class="flex items-center justify-center size-20 rounded-full bg-linear-to-br from-[#ad46ff] to-[#4f39f6] text-[32px] font-bold text-white shadow-[0_2px_6px_rgba(0,0,0,0.1),0_2px_4px_-2px_rgba(0,0,0,0.1)]">T</span>
            <div class="ml-6 pt-1">
              <h3 class="text-[32px] leading-[44px] font-semibold text-gray-900">The Brown Family</h3>
              <p class="text-2xl leading-[34px] text-gray-500">4 members</p>
            </div>
          </header>
        </article>
        <article class="flex flex-col h-[728px] rounded-3xl border-2 border-gray-200 bg-white">
          <header class="flex items-center h-[146px] px-10 border-b-2 border-gray-100 bg-linear-to-r from-purple-50 to-indigo-50">
            <span class="flex items-center justify-center size-20 rounded-full bg-linear-to-br from-[#ad46ff] to-[#4f39f6] text-[32px] font-bold text-white shadow-[0_2px_6px_rgba(0,0,0,0.1),0_2px_4px_-2px_rgba(0,0,0,0.1)]">T</span>
            <div class="ml-6 pt-1">
              <h3 class="text-[32px] leading-[44px] font-semibold text-gray-900">The Davis Family</h3>
              <p class="text-2xl leading-[34px] text-gray-500">2 members</p>
            </div>
          </header>
        </article>
        <article class="flex flex-col h-[728px] rounded-3xl border-2 border-gray-200 bg-white">
          <header class="flex items-center h-[146px] px-10 border-b-2 border-gray-100 bg-linear-to-r from-purple-50 to-indigo-50">
            <span class="flex items-center justify-center size-20 rounded-full bg-linear-to-br from-[#ad46ff] to-[#4f39f6] text-[32px] font-bold text-white shadow-[0_2px_6px_rgba(0,0,0,0.1),0_2px_4px_-2px_rgba(0,0,0,0.1)]">T</span>
            <div class="ml-6 pt-1">
              <h3 class="text-[32px] leading-[44px] font-semibold text-gray-900">The Garcia Family</h3>
              <p class="text-2xl leading-[34px] text-gray-500">6 members</p>
            </div>
          </header>
        </article>
      </section>
    </main>
  </body>
</html>
